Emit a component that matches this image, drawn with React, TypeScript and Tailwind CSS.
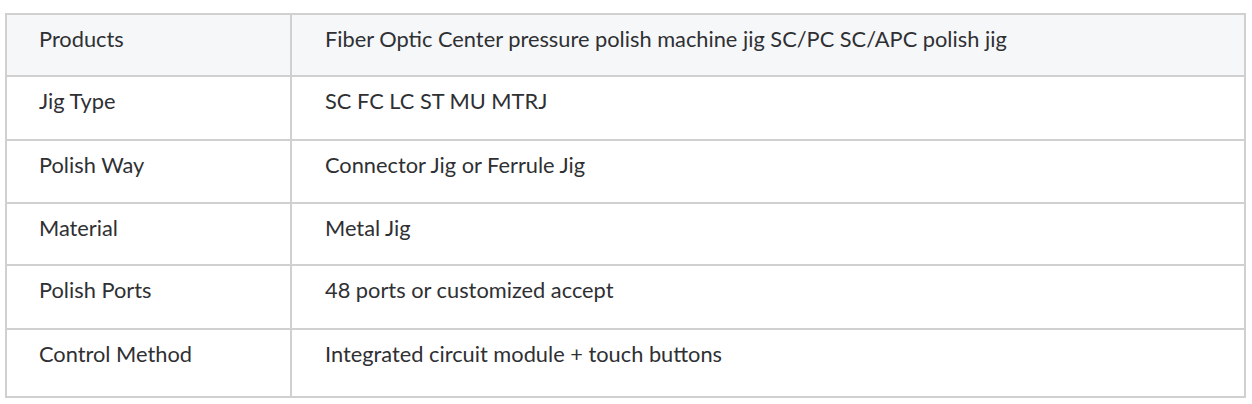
import React from "react";

const rows: { label: string; value: string; h: string }[] = [
  { label: "Products", value: "Fiber Optic Center pressure polish machine jig SC/PC SC/APC polish jig", h: "h-[62px]" },
  { label: "Jig Type", value: "SC FC LC ST MU MTRJ", h: "h-[64px]" },
  { label: "Polish Way", value: "Connector Jig or Ferrule Jig", h: "h-[63px]" },
  { label: "Material", value: "Metal Jig", h: "h-[62px]" },
  { label: "Polish Ports", value: "48 ports or customized accept", h: "h-[64px]" },
  { label: "Control Method", value: "Integrated circuit module + touch buttons", h: "h-[66px]" },
];

const App: React.FC = () => {
  return (
    <div className="w-[1252px] h-[404px] bg-white pt-[13px] pl-[5px] font-['Lato',sans-serif] text-[21.8px] leading-[26px] text-[#2f3033]">
      <div className="w-[1241px] border-2 border-[#d0d0d0]">
        {rows.map((row, i) => (
          <div
            key={row.label}
            className={`grid grid-cols-[283px_1fr] ${row.h} ${i < rows.length - 1 ? "border-b-2 border-[#d0d0d0]" : ""} ${i === 0 ? "bg-[#f6f7f9]" : ""}`}
          >
            <div className="pl-[32px] pt-[11px]">{row.label}</div>
            <div className="border-l-2 border-[#d0d0d0] pl-[33px] pt-[11px]">{row.value}</div>
          </div>
        ))}
      </div>
    </div>
  );
};

export default App;
